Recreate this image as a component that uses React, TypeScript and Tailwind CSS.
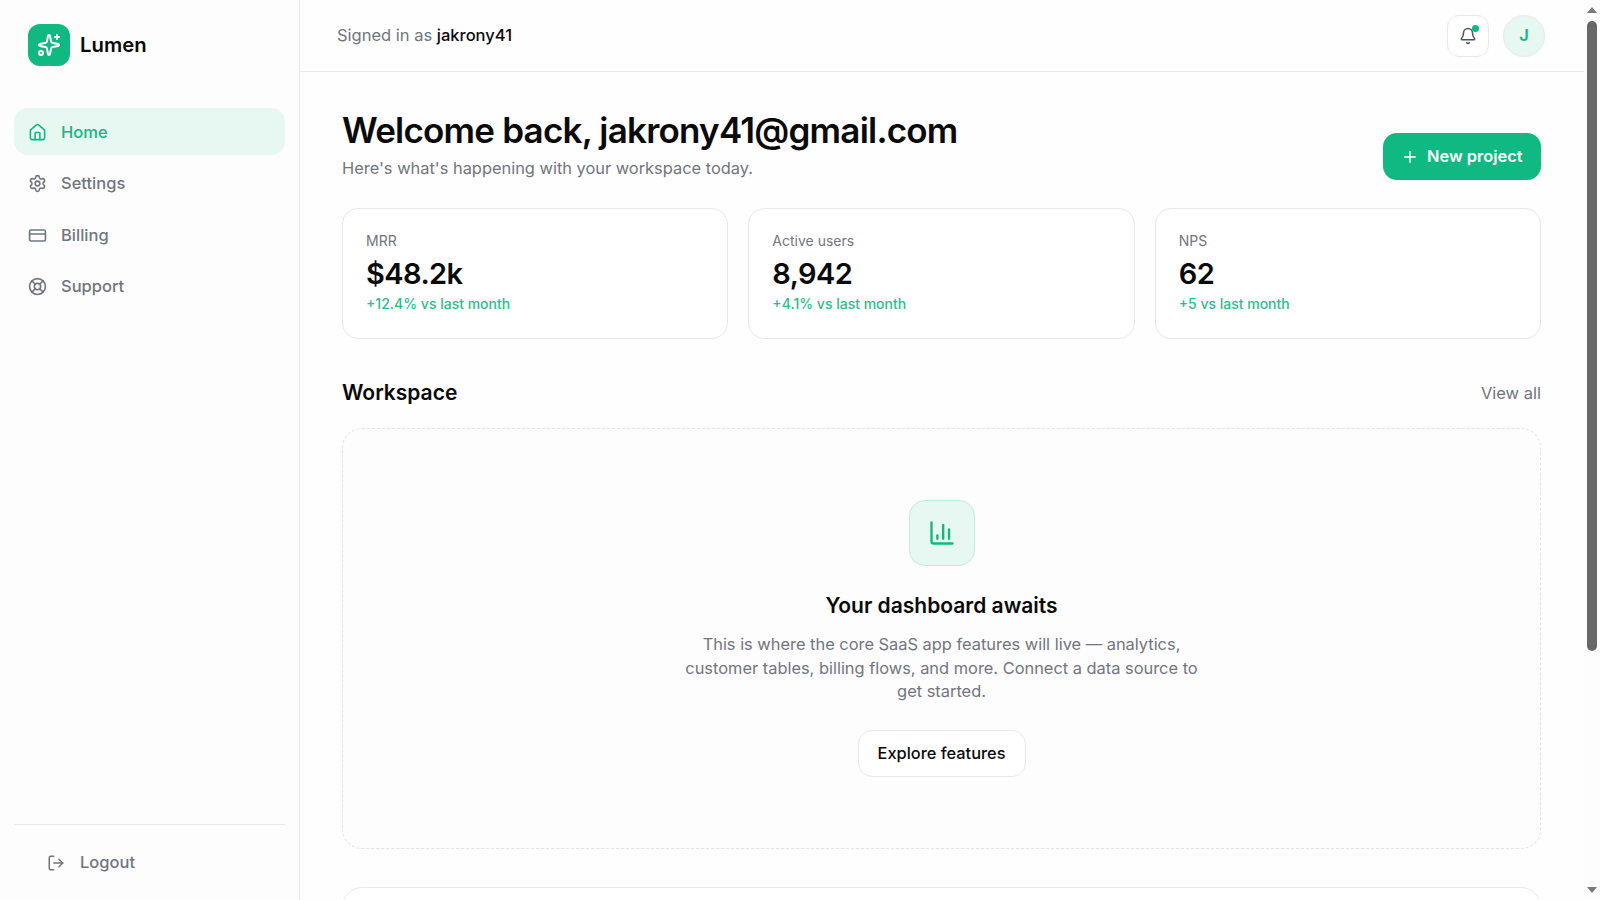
import { Bell, ChartColumn, CreditCard, House, LifeBuoy, LogOut, Plus, Settings, Sparkles } from "lucide-react"

const navItems = [
    { label: "Home", icon: House, active: true },
    { label: "Settings", icon: Settings, active: false },
    { label: "Billing", icon: CreditCard, active: false },
    { label: "Support", icon: LifeBuoy, active: false },
]

const stats = [
    { label: "MRR", value: "$48.2k", delta: "+12.4% vs last month" },
    { label: "Active users", value: "8,942", delta: "+4.1% vs last month" },
    { label: "NPS", value: "62", delta: "+5 vs last month" },
]

function Sidebar() {
    return (
        <aside className="flex w-[300px] shrink-0 flex-col border-r border-[#e8e9eb] bg-[#fdfdfd]">
            <div className="flex h-[90px] items-center gap-[10px] px-[28px]">
                <div className="flex h-[42px] w-[42px] items-center justify-center rounded-[12px] bg-[#10b981] text-white">
                    <Sparkles size={24} strokeWidth={2} />
                </div>
                <span className="text-[20.3px] font-semibold text-[#0a0a0a]">Lumen</span>
            </div>
            <nav className="mt-[18px] flex flex-col gap-[4.5px] px-[14px]">
                {navItems.map((item) => (
                    <a
                        key={item.label}
                        className={
                            item.active
                                ? "flex h-[47px] items-center gap-[14px] rounded-[14px] bg-[#e7f7f1] px-[14px] pt-[1px] text-[16.5px] font-medium text-[#10b981]"
                                : "flex h-[47px] items-center gap-[14px] rounded-[14px] px-[14px] pt-[1px] text-[16.5px] font-medium text-[#71757d]"
                        }
                    >
                        <item.icon size={19} strokeWidth={2} />
                        {item.label}
                    </a>
                ))}
            </nav>
            <div className="mx-[14px] mt-auto flex h-[76px] items-center border-t border-[#e8e9eb] pl-[33px]">
                <button className="flex items-center gap-[15px] text-[16.5px] font-medium text-[#71757d]">
                    <LogOut size={18} strokeWidth={2} />
                    Logout
                </button>
            </div>
        </aside>
    )
}

function Header() {
    return (
        <header className="flex h-[72px] shrink-0 items-center justify-between border-b border-[#e8e9eb] pl-[37px] pr-[39px]">
            <p className="text-[16.5px] text-[#71757d]">
                Signed in as <span className="font-medium text-[#0a0a0a]">jakrony41</span>
            </p>
            <div className="flex items-center gap-[14px]">
                <button className="relative flex h-[42px] w-[42px] items-center justify-center rounded-[12px] border border-[#e8e9eb] bg-white text-[#4b5563]">
                    <Bell size={18} strokeWidth={2} />
                    <span className="absolute right-[9px] top-[9px] h-[7px] w-[7px] rounded-full bg-[#10b981]" />
                </button>
                <div className="flex h-[42px] w-[42px] items-center justify-center rounded-full border border-[#e8e9eb] bg-[#e7f7f1] text-[16.5px] font-semibold text-[#10b981]">
                    J
                </div>
            </div>
        </header>
    )
}

function StatCard({ label, value, delta }: { label: string; value: string; delta: string }) {
    return (
        <div className="flex h-[131px] flex-col rounded-[16px] border border-[#e8e9eb] bg-white px-[23px] pt-[23px]">
            <p className="text-[14px] leading-[18px] text-[#71757d]">{label}</p>
            <p className="mt-[4px] text-[29px] font-semibold leading-[40px] tracking-[-0.02em] text-[#0a0a0a]">{value}</p>
            <p className="text-[14px] font-medium leading-[20px] text-[#2cbd8b]">{delta}</p>
        </div>
    )
}

function EmptyState() {
    return (
        <div className="flex h-[421px] shrink-0 flex-col items-center rounded-[20px] border border-dashed border-[#e1e3e6] bg-[#fdfdfd] pt-[71px]">
            <div className="flex h-[66px] w-[66px] items-center justify-center rounded-[16px] border border-[#bfeedd] bg-[#e7f7f1] text-[#10b981]">
                <ChartColumn size={28} strokeWidth={2} />
            </div>
            <h3 className="mt-[25px] text-[21px] font-semibold leading-[30px] text-[#0a0a0a]">Your dashboard awaits</h3>
            <p className="mt-[12px] w-[530px] text-center text-[16.4px] leading-[23.5px] text-[#71757d]">
                This is where the core SaaS app features will live — analytics, customer tables, billing flows, and more. Connect a data source to get started.
            </p>
            <button className="mt-[26px] h-[47px] rounded-[14px] border border-[#e8e9eb] bg-white px-[19px] text-[16.4px] font-medium text-[#0a0a0a]">
                Explore features
            </button>
        </div>
    )
}

function Scrollbar() {
    return (
        <div className="flex w-[16px] shrink-0 flex-col items-center bg-[#fdfdfd]">
            <div className="mt-[7px] h-0 w-0 border-x-[5px] border-b-[6px] border-x-transparent border-b-[#7a7a7a]" />
            <div className="mt-[8px] h-[630px] w-[10px] rounded-full bg-[#686868]" />
            <div className="mb-[7px] mt-auto h-0 w-0 border-x-[5px] border-t-[6px] border-x-transparent border-t-[#7a7a7a]" />
        </div>
    )
}

export default function App() {
    return (
        <div className="flex h-screen w-screen overflow-hidden bg-[#fefefe] font-['Inter',sans-serif]">
            <Sidebar />
            <div className="flex min-w-0 flex-1 flex-col">
                <Header />
                <main className="flex flex-col pl-[42px] pr-[43px]">
                    <div className="mt-[36px] flex items-start justify-between">
                        <div>
                            <h1 className="text-[35px] font-semibold leading-[44px] tracking-[-0.0225em] text-[#0a0a0a]">Welcome back, jakrony41@gmail.com</h1>
                            <p className="mt-[4px] text-[16.4px] leading-[24px] text-[#71757d]">Here's what's happening with your workspace today.</p>
                        </div>
                        <button className="mt-[25px] flex h-[47px] items-center gap-[8px] rounded-[14px] bg-[#10b981] px-[18.5px] text-[16.4px] font-semibold text-white">
                            <Plus size={18} strokeWidth={2} />
                            New project
                        </button>
                    </div>
                    <div className="mt-[28px] grid grid-cols-3 gap-[20px]">
                        {stats.map((stat) => (
                            <StatCard key={stat.label} {...stat} />
                        ))}
                    </div>
                    <div className="mt-[39px] flex items-center justify-between">
                        <h2 className="text-[21px] font-semibold leading-[30px] text-[#0a0a0a]">Workspace</h2>
                        <a className="text-[16.5px] text-[#71757d]">View all</a>
                    </div>
                    <div className="mt-[20px]">
                        <EmptyState />
                    </div>
                    <div className="mt-[38px] h-[120px] shrink-0 rounded-[20px] border border-[#e8e9eb] bg-white" />
                </main>
            </div>
            <Scrollbar />
        </div>
    )
}
